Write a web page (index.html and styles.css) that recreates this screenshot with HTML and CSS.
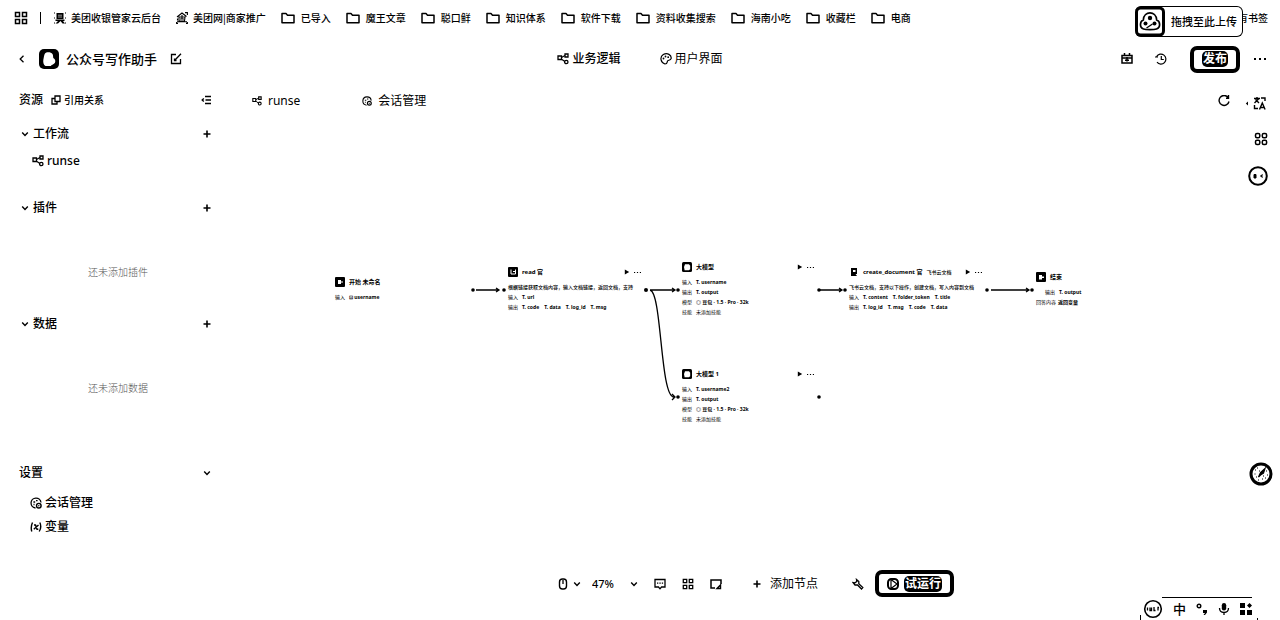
FILE: index.html
```html
<!DOCTYPE html>
<html lang="zh-CN">
<head>
<meta charset="utf-8">
<title>公众号写作助手</title>
<link rel="stylesheet" href="styles.css">
</head>
<body>
<svg class="defs" aria-hidden="true">
  <symbol id="folder" viewBox="0 0 14 12"><path d="M1 10.5V1.5h4l1.5 1.7H13v7.5H1z" fill="none" stroke="#000" stroke-width="1.5" stroke-linejoin="round"/></symbol>
  <symbol id="flow" viewBox="0 0 12 12"><path d="M1 3h3.500v3.500H1zM8 1h3v3H8z" fill="none" stroke="#000" stroke-width="1.3"/><circle cx="9.3" cy="9" r="1.7" fill="none" stroke="#000" stroke-width="1.3"/><path d="M4.5 4.500 8 2.500M5 6.500l2.800 2" stroke="#000" stroke-width="1.2"/></symbol>
  <symbol id="chat" viewBox="0 0 12 12"><path d="M5.500 11A5 5 0 1 1 11 5.500" fill="none" stroke="#000" stroke-width="1.3"/><path d="M3.4 5h1.800M6 3.600h1.600M3.500 7.500h1" stroke="#000" stroke-width="1.3"/><circle cx="8.800" cy="8.700" r="2.300" fill="none" stroke="#000" stroke-width="1.4"/><circle cx="8.800" cy="8.700" r=".7"/></symbol>
  <symbol id="down" viewBox="0 0 8 8"><path d="m1.2 2.5 2.8 3 2.8-3" fill="none" stroke="#000" stroke-width="1.4"/></symbol>
  <symbol id="plus" viewBox="0 0 8 8"><path d="M4 .5v7M.5 4h7" stroke="#000" stroke-width="1.6"/></symbol>
  <symbol id="play" viewBox="0 0 6 6"><path d="M.8.4 5.2 3 .8 5.6z"/></symbol>
  <symbol id="dots" viewBox="0 0 12 4"><path d="M0 1h2v2H0zM5 1h2v2H5zM10 1h2v2h-2z"/></symbol>
  <symbol id="apps" viewBox="0 0 14 14"><path d="M1.5 1.5h4v4h-4zM8.5 1.5h4v4h-4zM1.5 8.5h4v4h-4zM8.5 8.5h4v4h-4z" fill="none" stroke="#000" stroke-width="1.5"/></symbol>
  <symbol id="model" viewBox="0 0 10 10"><rect width="10" height="10" rx="1.5"/><path d="M3 2.2h4l1.2 1.5v3.6L6.8 8.2H2.6L2 5z" fill="#fff"/></symbol>
</svg>

<nav class="bookmarks" aria-label="书签栏">
  <a href="#" class="apps" aria-label="应用"><svg class="i14"><use href="#apps"/></svg></a>
  <span class="divider"></span>
  <a href="#" class="site"><svg class="i12" viewBox="0 0 12 12"><path d="M2.5 1h7v6h-7zM1.5 7.5h9V9H9l2 2.5H8.5L6.5 9 4 11.5H1.5L4 9H1.5z"/><path d="M4 3.2h4M4 5h4" stroke="#fff" stroke-width=".6"/><path d="M0 1h1M11 1h1M0 11h1M11 11h1M0 6h1M11 6h1" stroke="#000"/></svg>美团收银管家云后台</a>
  <a href="#" class="site"><svg class="i12" viewBox="0 0 12 12"><path d="M9 .6h2.400V3M.6 10v1.400H2M11.400 10v1.400H10M1 5 6 1l4.500 3.500M3 5h6L8.500 9H3zM4 7h4M1 9.800h10M6 3v4M1.500 6.500v2" fill="none" stroke="#000" stroke-width="1.100"/></svg>美团网|商家推广</a>
  <a href="#"><svg class="folder"><use href="#folder"/></svg>已导入</a>
  <a href="#"><svg class="folder"><use href="#folder"/></svg>魔王文章</a>
  <a href="#"><svg class="folder"><use href="#folder"/></svg>聪口鲜</a>
  <a href="#"><svg class="folder"><use href="#folder"/></svg>知识体系</a>
  <a href="#"><svg class="folder"><use href="#folder"/></svg>软件下载</a>
  <a href="#"><svg class="folder"><use href="#folder"/></svg>资料收集搜索</a>
  <a href="#"><svg class="folder"><use href="#folder"/></svg>海南小吃</a>
  <a href="#"><svg class="folder"><use href="#folder"/></svg>收藏栏</a>
  <a href="#"><svg class="folder"><use href="#folder"/></svg>电商</a>
  <a href="#" class="all">有书签</a>
</nav>

<header class="header">
  <div class="project">
    <button aria-label="返回"><svg class="i8" viewBox="0 0 8 8"><path d="M5.5.8 2.2 4l3.3 3.2" fill="none" stroke="#000" stroke-width="1.3"/></svg></button>
    <svg class="logo" viewBox="0 0 20 20"><rect width="20" height="20" rx="5"/><path d="M6 4.5C7 3 12 2.700 13.500 5c.7 1.500.6 3 .8 4 2 .8 2.500 3.500 1.500 5-1.500 2-3.500 1.500-4 3H6.500C4.500 16 4 13 4.300 11 4.800 9 5 6 6 4.500z" fill="#fff"/></svg>
    <h1>公众号写作助手</h1>
    <button aria-label="编辑"><svg class="i12" viewBox="0 0 12 12"><path d="M6 1.500H1.500v9h9V6M5 7l6-6.200M4.500 5.500v2h2" fill="none" stroke="#000" stroke-width="1.300"/></svg></button>
  </div>
  <nav class="modes">
    <a href="#"><svg class="i12"><use href="#flow"/></svg><b>业务逻辑</b></a>
    <a href="#"><svg class="i12" viewBox="0 0 12 12"><path d="M5 11C.5 9.500-.5 4 3.300 1.600c4-2.300 8.500.4 7.800 4C10.500 7.500 8 7 7.500 8c-.4 1 0 3-2.500 3z" fill="none" stroke="#000" stroke-width="1.200"/><circle cx="3.500" cy="5.500" r=".9"/><circle cx="5.500" cy="3.500" r=".9"/><circle cx="8.200" cy="4.200" r=".9"/></svg>用户界面</a>
  </nav>
  <div class="actions">
    <button aria-label="资源包"><svg class="i12" viewBox="0 0 12 12"><path d="M1 2.500h10v7.500H1zM1 5h10M3.500 0v3M8.500 0v3M6 4v4.500M4 7.300h4" fill="none" stroke="#000" stroke-width="1.500"/></svg></button>
    <button class="history" aria-label="历史"><svg class="i12" viewBox="0 0 12 12"><path d="M1.600 3.500A5 5 0 1 1 2 9.200M0 4h3M6.300 3v3.500h2.500" fill="none" stroke="#000" stroke-width="1.200"/></svg></button>
    <button class="solid"><span>发布</span></button>
    <button class="more" aria-label="更多"><svg class="dots"><use href="#dots"/></svg></button>
  </div>
</header>

<div class="body">
  <aside class="sidebar">
    <div class="row top">
      <b>资源</b>
      <a href="#" class="refs"><svg class="i10" viewBox="0 0 10 10"><path d="M4 1h5v5.500H4zM4 3.500H1V9h5V6.500" fill="none" stroke="#000" stroke-width="1.300"/></svg>引用关系</a>
      <button class="end" aria-label="收起"><svg class="i10" viewBox="0 0 10 10"><path d="M4 1.500h6M4.500 5H10M4 8.500h6M2.800 3.500 1.200 5l1.600 1.500" fill="none" stroke="#000" stroke-width="1.400"/></svg></button>
    </div>
    <section class="group first">
      <div class="row"><svg class="i8"><use href="#down"/></svg><b>工作流</b><button class="end" aria-label="添加工作流"><svg class="i8"><use href="#plus"/></svg></button></div>
      <a href="#" class="item runse"><svg class="i12"><use href="#flow"/></svg><b>runse</b></a>
    </section>
    <section class="group">
      <div class="row"><svg class="i8"><use href="#down"/></svg><b>插件</b><button class="end" aria-label="添加插件"><svg class="i8"><use href="#plus"/></svg></button></div>
      <p class="empty">还未添加插件</p>
    </section>
    <section class="group">
      <div class="row"><svg class="i8"><use href="#down"/></svg><b>数据</b><button class="end" aria-label="添加数据"><svg class="i8"><use href="#plus"/></svg></button></div>
      <p class="empty">还未添加数据</p>
    </section>
    <section class="settings">
      <div class="row top"><b>设置</b><button class="end" aria-label="收起设置"><svg class="i8"><use href="#down"/></svg></button></div>
      <a href="#" class="item"><svg class="i12"><use href="#chat"/></svg><b>会话管理</b></a>
      <a href="#" class="item"><svg class="i12" viewBox="0 0 12 12"><path d="M2.500 1.500Q.4 6 1.800 10.500M9.800 1.500Q12 6 9.200 10.500M4 4h1.500l1.500 4.200H8.300M8.500 4 3.800 8.300" fill="none" stroke="#000" stroke-width="1.400"/></svg><b>变量</b></a>
    </section>
  </aside>

  <main class="main">
    <nav class="tabs">
      <a href="#"><svg class="i10"><use href="#flow"/></svg>runse</a>
      <a href="#"><svg class="i10"><use href="#chat"/></svg>会话管理</a>
      <button class="end" aria-label="刷新"><svg class="i12" viewBox="0 0 12 12"><path d="M10 2.300A5 5 0 1 0 11 6.500M10.500 0v3.200H8" fill="none" stroke="#000" stroke-width="1.400"/></svg></button>
    </nav>

    <div class="canvas">
      <svg class="edges" aria-hidden="true">
        <g fill="none" stroke="#000" stroke-width="1.300">
          <path d="M250 170h23M270 168l3 2-3 2M424 170h25M446 168l3 2-3 2M424 170C436 172 434 277 448 277M446 274l3 3-3 3M594 170h22M613 168l3 2-3 2M765 170h38M800 168l3 2-3 2"/>
        </g>
        <circle cx="247" cy="170" r="1.800"/><circle cx="278" cy="170" r="1.800"/><circle cx="420" cy="170" r="2"/><circle cx="452" cy="170" r="1.800"/><circle cx="452" cy="277" r="1.800"/><circle cx="593" cy="170" r="1.800"/><circle cx="593" cy="277" r="1.800"/><circle cx="619" cy="170" r="1.800"/><circle cx="761" cy="170" r="1.800"/><circle cx="806" cy="170" r="1.800"/>
      </svg>

      <article class="node start">
        <div class="head"><svg class="i10" viewBox="0 0 10 10"><rect width="10" height="10" rx="1"/><path d="M3 3h3v1.500h2v1H6V7H3z" fill="#fff"/></svg><b>开始 未命名</b></div>
        <p><span>输入</span><b>⊡ username</b></p>
      </article>

      <article class="node read">
        <div class="head"><svg class="i10" viewBox="0 0 10 10"><rect width="10" height="10" rx="1"/><path d="M3 2.500v4.500h4.500V2.500M5 4.500h2" fill="none" stroke="#fff"/></svg><b>read 官</b><button class="end" aria-label="运行 read"><svg class="i6"><use href="#play"/></svg></button><button aria-label="更多"><svg class="dots s"><use href="#dots"/></svg></button></div>
        <p class="desc">根据链接获取文档内容，输入文档链接，返回文档，支持</p>
        <p><span>输入</span><b>T. url</b></p>
        <p><span>输出</span><b>T. code</b><b>T. data</b><b>T. log_id</b><b>T. msg</b></p>
      </article>

      <article class="node llm">
        <div class="head"><svg class="i10"><use href="#model"/></svg><b>大模型</b><button class="end" aria-label="运行 大模型"><svg class="i6"><use href="#play"/></svg></button><button aria-label="更多"><svg class="dots s"><use href="#dots"/></svg></button></div>
        <p><span>输入</span><b>T. username</b></p>
        <p><span>输出</span><b>T. output</b></p>
        <p><span>模型</span><b>◎ 豆包 · 1.5 · Pro · 32k</b></p>
        <p><span>技能</span>未添加技能</p>
      </article>

      <article class="node llm2">
        <div class="head"><svg class="i10"><use href="#model"/></svg><b>大模型 1</b><button class="end" aria-label="运行 大模型 1"><svg class="i6"><use href="#play"/></svg></button><button aria-label="更多"><svg class="dots s"><use href="#dots"/></svg></button></div>
        <p><span>输入</span><b>T. username2</b></p>
        <p><span>输出</span><b>T. output</b></p>
        <p><span>模型</span><b>◎ 豆包 · 1.5 · Pro · 32k</b></p>
        <p><span>技能</span>未添加技能</p>
      </article>

      <article class="node create">
        <div class="head"><svg class="i10" viewBox="0 0 10 10"><path d="M2 1h6v8H2z"/><path d="M4 3h2.500v2H4zM6.500 7h1.500v2z" fill="#fff"/></svg><b>create_document 官</b><i>飞书云文档</i><button class="end" aria-label="运行 create_document"><svg class="i6"><use href="#play"/></svg></button><button aria-label="更多"><svg class="dots s"><use href="#dots"/></svg></button></div>
        <p class="desc">飞书云文档，支持以下操作，创建文档，写入内容到文档</p>
        <p><span>输入</span><b>T. content</b><b>T. folder_token</b><b>T. title</b></p>
        <p><span>输出</span><b>T. log_id</b><b>T. msg</b><b>T. code</b><b>T. data</b></p>
      </article>

      <article class="node finish">
        <div class="head"><svg class="i10" viewBox="0 0 10 10"><rect width="10" height="10" rx="1"/><path d="M3 3h3v1.500h2v1.500H6v1.500H3z" fill="#fff"/></svg><b>结束</b></div>
        <p class="inset"><span>输出</span><b>T. output</b></p>
        <p><span class="wide">回答内容</span><b>返回变量</b></p>
      </article>

      <div class="toolbar">
        <button class="pair" aria-label="鼠标模式"><svg class="i12" viewBox="0 0 12 12"><rect x="2.500" y="1" width="7" height="10" rx="3" fill="none" stroke="#000" stroke-width="1.400"/><path d="M6 2v4" stroke="#000" stroke-width="1.300"/></svg><svg class="i8"><use href="#down"/></svg></button>
        <label class="zoom"><select aria-label="缩放"><option>47%</option><option>100%</option></select><svg class="i8"><use href="#down"/></svg></label>
        <button aria-label="评论"><svg class="i12" viewBox="0 0 12 12"><path d="M1 1.500h10v7.500H7.500L6 10.800 4.500 9H1z" fill="none" stroke="#000" stroke-width="1.300"/><path d="M3 4.500h1.300v1.300H3zM5.400 4.500h1.300v1.300H5.400zM7.800 4.500h1.300v1.300H7.800z"/></svg></button>
        <button aria-label="整理布局"><svg class="i12"><use href="#apps"/></svg></button>
        <button aria-label="缩略图"><svg class="i12" viewBox="0 0 12 12"><path d="M5 10H1V2h10v4" fill="none" stroke="#000" stroke-width="1.500"/><path d="M7 10.500 10.500 7v3.500z" fill="none" stroke="#000" stroke-width="1.400"/></svg></button>
        <button class="add"><svg class="i8"><use href="#plus"/></svg>添加节点</button>
        <button aria-label="调试"><svg class="i12" viewBox="0 0 12 12"><path d="M4.500 1.500 6.800 3.500V5.800l4 3.700-1.300 1.500-4-4H3L1 4.500l2 .3L4.800 3.500z" fill="none" stroke="#000" stroke-width="1.300"/></svg></button>
        <button class="solid run"><svg class="i12" viewBox="0 0 12 12"><rect x="1" y="1" width="10" height="10" rx="3.500" fill="#fff" stroke="#000" stroke-width="2"/><path d="M4 1.500 10 6 4 10.500z" fill="#fff" stroke="#000" stroke-width="1.200"/></svg><span>试运行</span></button>
      </div>
    </div>
  </main>
</div>

<div class="upload">
  <svg class="upload-icon" viewBox="0 0 30 30"><rect x="1.500" y="1.500" width="27" height="27" rx="4" fill="#fff" stroke="#000" stroke-width="3"/><path d="M8.500 22.500C4 21 5 14.500 8.300 13.500 9 4 21 4 21.700 13.500c3.500 1 4.300 7.500-.2 9-2.500.8-10.500.8-13 0z" fill="#fff" stroke="#000" stroke-width="1.700"/><circle cx="15" cy="11.500" r="2.200"/><circle cx="10.500" cy="17" r="2"/><circle cx="19.500" cy="17" r="2"/><path d="M11.500 21.500l6-4" stroke="#000" stroke-width="1.300"/></svg>
  <b>拖拽至此上传</b>
</div>

<div class="rail">
  <button aria-label="翻译"><svg class="translate" viewBox="0 0 22 14"><path d="M3 5.500v4L.8 7.500z"/><path d="M9 2.500h6M12 1v1.500M9.500 7l4-4M10.500 3.500 14 7M16 2h4v3M9.500 9v3.500H13M14.500 13.500 17.300 7l2.800 6.500M15.500 11.500h3.500" fill="none" stroke="#000" stroke-width="1.400"/></svg></button>
  <button class="grid" aria-label="工具"><svg class="i14" viewBox="0 0 14 14"><g fill="none" stroke="#000" stroke-width="1.500"><rect x="1.500" y="1.500" width="4.300" height="4.300" rx="1.500"/><rect x="8.300" y="1.500" width="4.300" height="4.300" rx="1.500"/><rect x="1.500" y="8.300" width="4.300" height="4.300" rx="1.500"/><rect x="8.300" y="8.300" width="4.300" height="4.300" rx="1.500"/></g></svg></button>
  <button class="face" aria-label="助手"><svg class="i20" viewBox="0 0 20 20"><circle cx="10" cy="10" r="8.800" fill="#fff" stroke="#000" stroke-width="2"/><path d="M6 8.500h2v3.500H6zM14.500 8.500 12.500 10l2 1.500" stroke="#000"/></svg></button>
</div>

<button class="compass" aria-label="快捷助手"><svg class="i24" viewBox="0 0 24 24"><circle cx="12" cy="12" r="10" fill="#fff" stroke="#000" stroke-width="3"/><path d="m9.500 15 2-4.500 4.500-4-1.500 4.500-3 2z" stroke="#000" stroke-width="1.200"/><path d="M6 8h1M8 6h1M5.500 12h1M7 15h1M17 9h1M16 16h1M13 17h1M18 13h1M10 9h1M14 14h1M9 18h1" stroke="#000"/></svg></button>

<div class="ime">
  <svg class="i20" viewBox="0 0 20 20"><circle cx="10" cy="10" r="8.300" fill="none" stroke="#000" stroke-width="1.600"/><path d="M4.500 8.500v3M7 8.500v3h1.500v-3M11 8v3.500h1.500M15 11.500v-3h1" fill="none" stroke="#000" stroke-width="1.300"/></svg>
  <b>中</b>
  <svg class="i12" viewBox="0 0 12 12"><circle cx="3" cy="3" r="1.800" fill="none" stroke="#000" stroke-width="1.400"/><path d="M7 7h4v2.500L9 12H7.500L9 10H7z"/></svg>
  <svg class="i12" viewBox="0 0 12 12"><rect x="3.800" y="0" width="4.400" height="7.500" rx="2.200"/><path d="M1.500 5c0 6 9 6 9 0M6 9v3" fill="none" stroke="#000" stroke-width="1.300"/></svg>
  <svg class="i12" viewBox="0 0 12 12"><path d="M0 0h5v5H0zM0 7h5v5H0zM7 7h5v5H7zM9.500 0 12 2.500 9.500 5 7 2.500z"/></svg>
</div>
</body>
</html>
```

FILE: styles.css
```css
* { box-sizing: border-box; }

body {
  margin: 0;
  min-height: 100vh;
  display: flex;
  flex-direction: column;
  overflow: hidden;
  position: relative;
  background: #fff;
  color: #000;
  font: 12px/16px "Noto Sans", "Noto Sans CJK SC", sans-serif;
}

a { color: inherit; text-decoration: none; }
p, h1 { margin: 0; }
b { font-weight: 500; }
svg { display: block; flex: none; }

button {
  display: flex;
  align-items: center;
  padding: 0;
  border: 0;
  background: none;
  color: inherit;
  font: inherit;
}

.defs { position: absolute; width: 0; height: 0; }
.end { margin-left: auto; }

.i6 { width: 6px; height: 6px; }
.i8 { width: 8px; height: 8px; }
.i10 { width: 10px; height: 10px; }
.i12 { width: 12px; height: 12px; }
.i14 { width: 14px; height: 14px; }
.i20 { width: 20px; height: 20px; }
.i24 { width: 24px; height: 24px; }
.folder { width: 14px; height: 12px; }
.dots { width: 12px; height: 4px; }
.dots.s { width: 7px; height: 3px; }

/* bookmarks */
.bookmarks {
  display: flex;
  align-items: center;
  gap: 15px;
  height: 36px;
  padding: 0 12px 0 14px;
  font-family: "Noto Sans CJK SC", sans-serif;
  font-size: 10px;
  font-weight: 500;
  white-space: nowrap;
}
.bookmarks a { display: flex; align-items: center; gap: 6px; }
.bookmarks .site { gap: 5px; }
.bookmarks .all { margin-left: auto; }
.divider { width: 1px; height: 12px; margin: 0 -2px 0 -3px; background: #000; }

/* header */
.header {
  display: grid;
  grid-template-columns: 1fr auto 1fr;
  align-items: center;
  height: 46px;
  padding: 0 14px 0 18px;
}
.project, .modes, .modes a, .actions { display: flex; align-items: center; }
.logo { width: 20px; height: 20px; margin: 0 7px 0 13px; }
.project h1 { margin-right: 13px; font-size: 13px; font-weight: 500; }
.modes { gap: 39px; padding-right: 4px; }
.modes a { gap: 3px; }
.actions { justify-content: flex-end; }
.history { margin: 0 23px 0 22px; }
.more { margin-left: 14px; }

.solid {
  height: 27px;
  padding: 0 8px;
  border: 4px solid #000;
  border-radius: 7px;
}
.solid span {
  padding: 0 1px;
  border-radius: 5px;
  background: #000;
  color: #fff;
  font-weight: 700;
}

/* body */
.body { display: flex; flex: 1; }
.sidebar { width: 226px; padding: 0 15px 0 19px; }
.row { display: flex; align-items: center; gap: 4px; height: 32px; padding-left: 2px; }
.row.top { gap: 8px; height: 36px; padding-left: 0; }
.refs { display: flex; align-items: center; gap: 3px; font-size: 10px; font-weight: 500; }
.group.first { margin-bottom: 20px; }
.item { display: flex; align-items: center; gap: 3px; height: 24px; padding-left: 11px; }
.item.runse { height: 22px; padding-left: 13px; }
.empty {
  padding: 40px 0 28px;
  margin-left: 6px;
  color: #555;
  font-size: 10px;
  font-weight: 300;
  text-align: center;
}
.settings { padding-top: 31px; }

.main { display: flex; flex: 1; flex-direction: column; min-width: 0; }
.tabs { display: flex; align-items: center; gap: 62px; height: 38px; padding: 0 50px 0 26px; }
.tabs a { display: flex; align-items: center; gap: 6px; }

/* canvas */
.canvas { flex: 1; position: relative; }
.edges { position: absolute; width: 100%; height: 100%; }
.node { position: absolute; font-size: 5px; line-height: 10px; white-space: nowrap; }
.node b { font-weight: 700; }
.node p { display: flex; gap: 5px; }
.node p span { width: 9px; }
.node p .wide { width: 17px; }
.node .desc { font-weight: 500; }
.node .inset { padding-left: 9px; }
.node .head { display: flex; align-items: center; gap: 4px; height: 10px; margin-bottom: 5px; font-size: 6px; }
.node .head i { font-size: 5px; font-style: normal; font-weight: 500; }
.start { left: 109px; top: 157px; }
.read { left: 282px; top: 147px; width: 133px; }
.llm { left: 456px; top: 142px; width: 132px; }
.llm2 { left: 456px; top: 249px; width: 132px; }
.create { left: 623px; top: 147px; width: 133px; }
.finish { left: 810px; top: 152px; }

.toolbar {
  position: absolute;
  right: 0;
  bottom: 23px;
  left: 0;
  display: flex;
  align-items: center;
  justify-content: center;
  gap: 16px;
  padding-left: 5px;
}
.pair { gap: 4px; margin-right: -5px; }
.zoom { display: flex; align-items: center; gap: 12px; }
.zoom select {
  width: 26px;
  padding: 0;
  border: 0;
  appearance: none;
  background: none;
  color: #000;
  font: 500 11px/16px "Noto Sans", sans-serif;
}
.add { gap: 9px; margin: 0 18px 0 15px; }
.toolbar .solid { gap: 5px; margin-left: -5px; }

/* floating widgets */
.upload {
  position: absolute;
  top: 6px;
  right: 37px;
  display: flex;
  align-items: center;
  gap: 6px;
  height: 31px;
  padding-right: 5px;
  border: 1px solid #000;
  border-left: 0;
  border-radius: 6px;
  background: #fff;
  font-size: 11px;
}
.upload-icon { width: 30px; height: 31px; }

.rail {
  position: absolute;
  top: 96px;
  right: 12px;
  display: flex;
  flex-direction: column;
  align-items: flex-end;
  gap: 22px;
}
.translate { width: 24px; height: 14px; }
.face { margin-top: -2px; }
.compass { position: absolute; top: 462px; right: 7px; }

.ime {
  position: absolute;
  right: 22px;
  bottom: 0;
  display: flex;
  align-items: center;
  gap: 10px;
  height: 23px;
  padding: 0 6px 0 3px;
  background: linear-gradient(#000, #000) 22px 0 / 90px 1px no-repeat;
  font-size: 13px;
}
.ime::before, .ime::after {
  content: "";
  position: absolute;
  bottom: 0;
  left: 0;
  width: 1px;
  height: 5px;
  background: #000;
}
.ime::after { right: 0; left: auto; height: 2px; }
```
